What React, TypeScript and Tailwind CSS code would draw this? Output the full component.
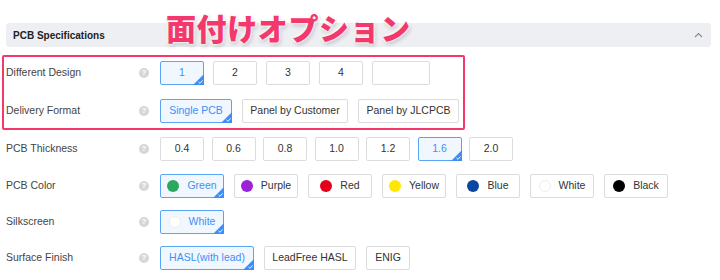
import React from 'react';

type Opt = { label: string; w?: number; selected?: boolean; dot?: string };

function Corner() {
  return (
    <svg className="absolute -right-px -bottom-px" width="11" height="11" viewBox="0 0 11 11">
      <path d="M11 0 L11 11 L0 11 Z" fill="#3e8ef7" />
      <path d="M5.5 8 L7 9.3 L9.6 6.4" stroke="#fff" strokeWidth="0.9" fill="none" />
    </svg>
  );
}

function OptButton({ opt }: { opt: Opt }) {
  const base = 'relative h-[24px] flex items-center justify-center gap-[8px] text-[10.5px] rounded-[2px] border';
  const look = opt.selected
    ? 'border-[#5aa4f8] bg-[#f0f7ff] text-[#4290f3]'
    : 'border-[#dcdcdc] bg-white text-[#333]';
  return (
    <div className={`${base} ${look}`} style={{ width: opt.w ?? 44 }}>
      {opt.dot && (
        <span
          className="w-[12px] h-[12px] rounded-full"
          style={{ background: opt.dot, border: opt.dot === '#ffffff' ? '1px solid #eeeeee' : 'none' }}
        />
      )}
      <span>{opt.label}</span>
      {opt.selected && <Corner />}
    </div>
  );
}

function Row({ label, opts, gap, className }: { label: string; opts: Opt[]; gap: string; className?: string }) {
  return (
    <div className={`flex items-center ${className ?? ''}`}>
      <div className="w-[133px] text-[10.5px] text-[#444]">{label}</div>
      <div className="w-[10px] h-[10px] rounded-full bg-[#d6d6d6] text-white text-[8px] font-bold leading-[10px] text-center">?</div>
      <div className={`flex ml-[11px] ${gap}`}>
        {opts.map((o, i) => (
          <OptButton key={i} opt={o} />
        ))}
      </div>
    </div>
  );
}

export default function App() {
  return (
    <div className="relative w-[720px] h-[280px] bg-white overflow-hidden font-['Liberation_Sans',Arial,sans-serif] pt-[23px]">
      {/* section header */}
      <div className="ml-[6px] w-[705px] h-[24px] bg-[#eeeff3] rounded-[3px] flex items-center justify-between pl-[7px] pr-[8px]">
        <span className="text-[10px] font-bold text-[#222]">PCB Specifications</span>
        <svg width="9" height="6" viewBox="0 0 9 6">
          <path d="M1 5 L4.5 1.5 L8 5" stroke="#888" strokeWidth="1.1" fill="none" />
        </svg>
      </div>

      {/* highlighted options */}
      <div className="ml-[2px] mt-[8px] w-[463px] h-[75px] border-2 border-[#f2386c] rounded-[2px] pl-[2px] pt-[4px]">
        <Row
          label="Different Design"
          gap="gap-[9px]"
          opts={[
            { label: '1', selected: true },
            { label: '2' },
            { label: '3' },
            { label: '4' },
            { label: '', w: 58 },
          ]}
        />
        <Row
          label="Delivery Format"
          gap="gap-[10px]"
          className="mt-[14px]"
          opts={[
            { label: 'Single PCB', w: 72, selected: true },
            { label: 'Panel by Customer', w: 106 },
            { label: 'Panel by JLCPCB', w: 101 },
          ]}
        />
      </div>

      <div className="pl-[6px]">
        <Row
          label="PCB Thickness"
          gap="gap-[7.5px]"
          className="mt-[7px]"
          opts={[
            { label: '0.4' },
            { label: '0.6' },
            { label: '0.8' },
            { label: '1.0' },
            { label: '1.2' },
            { label: '1.6', selected: true },
            { label: '2.0' },
          ]}
        />
        <Row
          label="PCB Color"
          gap="gap-[10px]"
          className="mt-[13px]"
          opts={[
            { label: 'Green', w: 64, dot: '#2aa85e', selected: true },
            { label: 'Purple', w: 64, dot: '#9b22d9' },
            { label: 'Red', w: 64, dot: '#e3001b' },
            { label: 'Yellow', w: 64, dot: '#ffe800' },
            { label: 'Blue', w: 64, dot: '#0b47a1' },
            { label: 'White', w: 64, dot: '#ffffff' },
            { label: 'Black', w: 64, dot: '#000000' },
          ]}
        />
        <Row
          label="Silkscreen"
          gap="gap-[10px]"
          className="mt-[12px]"
          opts={[{ label: 'White', w: 64, dot: '#ffffff', selected: true }]}
        />
        <Row
          label="Surface Finish"
          gap="gap-[10px]"
          className="mt-[12px]"
          opts={[
            { label: 'HASL(with lead)', w: 94, selected: true },
            { label: 'LeadFree HASL', w: 92 },
            { label: 'ENIG', w: 44 },
          ]}
        />
      </div>

      {/* annotation title */}
      <div className="absolute left-[166px] top-[12px] text-[30px] leading-[30px] tracking-[0.6px] font-black text-[#f2386c] font-['Noto_Sans_CJK_JP',sans-serif] [text-shadow:0_0_2px_#fff,0_0_3px_#fff,0_0_4px_#fff,1px_2px_4px_rgba(0,0,0,0.3)]">
        面付けオプション
      </div>
    </div>
  );
}
